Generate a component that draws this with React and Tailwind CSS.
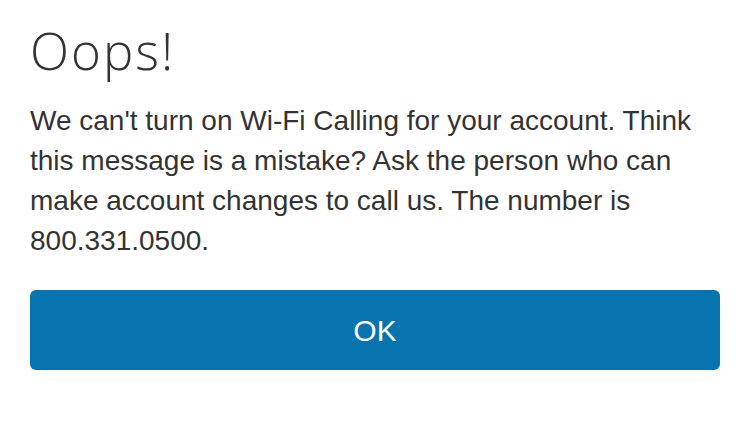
export default function App() {
  return (
    <div className="flex h-[438px] w-[750px] flex-col bg-white px-[30px] pt-[20px] text-[#333333]">
      <h1 className="font-['Open_Sans',sans-serif] text-[51px] font-light leading-[60px] tracking-[2px]">Oops!</h1>
      <p className="mt-[21px] font-['Liberation_Sans',Arial,sans-serif] text-[28px] leading-[40px]">
        We can't turn on Wi-Fi Calling for your account. Think this message is a mistake? Ask the person who can make account changes to call us. The number is 800.331.0500.
      </p>
      <button className="mt-[29px] h-[80px] w-full rounded-[6px] bg-[#0774af] font-['Liberation_Sans',Arial,sans-serif] text-[30px] text-white">
        OK
      </button>
    </div>
  );
}
